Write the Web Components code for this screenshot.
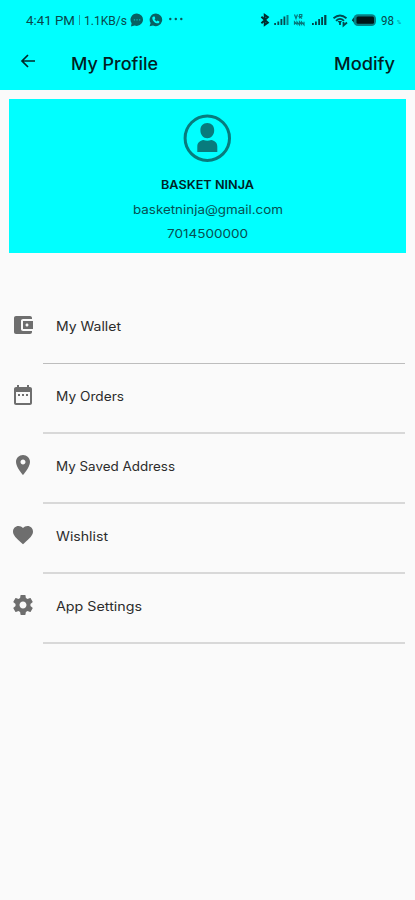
<!DOCTYPE html>
<html lang="en">
<head>
<meta charset="utf-8">
<title>My Profile</title>
<style>
html,body{margin:0;height:100%;background:#fafafa;overflow:hidden}
body{font-family:Inter,"Open Sans",sans-serif;color:#111}
</style>
</head>
<body>
<profile-screen></profile-screen>
<script>
const define = (name, html, setup) => customElements.define(name, class extends HTMLElement {
  connectedCallback() {
    if (this.shadowRoot) return;
    const t = document.createElement('template');
    t.innerHTML = typeof html === 'function' ? html(this) : html;
    this.attachShadow({mode: 'open'}).append(t.content.cloneNode(true));
    if (setup) setup(this, this.shadowRoot);
  }
});

define('wide-text', `<style>
:host{display:block;flex:none}
svg{display:block;overflow:visible}
text{fill:currentColor}
</style><svg><text lengthAdjust="spacingAndGlyphs"></text></svg>`, (el, root) => {
  const w = +el.getAttribute('w'), s = +el.getAttribute('size'), h = Math.round(s * 1.4);
  const svg = root.querySelector('svg'), t = root.querySelector('text');
  svg.setAttribute('width', w); svg.setAttribute('height', h);
  t.setAttribute('y', Math.round(s * 1.08)); t.setAttribute('textLength', w);
  t.style.fontSize = s + 'px';
  t.textContent = el.getAttribute('text');
});

define('status-bar', `<style>
:host{display:flex;align-items:center;height:40px;box-sizing:border-box;padding:0 14px 1px 26px;color:#08484b;font-family:Roboto,sans-serif}
svg{display:block;flex:none}
.left,.right{display:flex;align-items:center}
.right{margin-left:auto}
.bar{width:1px;height:10px;background:#1a9a9c;margin:0 4px}
</style>
<div class="left">
<wide-text text="4:41 PM" w="49" size="12.5"></wide-text><span class="bar"></span>
<wide-text text="1.1KB/s" w="43" size="12.5"></wide-text>
<svg width="14" height="14" viewBox="0 0 14 14" style="margin-left:3px"><path d="M7 .5a6.2 6.2 0 1 1-2.4 12L1 13.4l.6-3.1A6.3 6.3 0 0 1 7 .5z" fill="#086063"/><path d="M3.8 6.3h1.3v1.2H3.8zm2.6 0h1.3v1.2H6.4zm2.6 0h1.3v1.2H9z" fill="#08b5b7"/></svg>
<svg width="14" height="14" viewBox="0 0 14 14" style="margin-left:5px"><path d="M7 .5A6.3 6.3 0 1 1 4 12.4l-3.4.9 1-3.2A6.3 6.3 0 0 1 7 .5z" fill="#086063"/><path d="M4.6 3.5l1 .1.7 1.7-.8.9c.5 1 1.2 1.7 2.2 2.2l.9-.8 1.8.8c.1 1.2-.8 2-1.8 1.9-2.7 0-5-2.5-5.300-5.100 0-.8.5-1.500 1.300-1.700z" fill="#0ff"/></svg>
<svg width="14" height="4" viewBox="0 0 14 4" style="margin-left:6px;margin-top:-1px"><g fill="#08575a"><circle cx="1.300" cy="2" r="1.200"/><circle cx="6.800" cy="2" r="1.200"/><circle cx="12.300" cy="2" r="1.200"/></g></svg>
</div>
<div class="right">
<svg width="116" height="16" viewBox="0 0 116 16" style="overflow:visible">
<path d="M.4 4.700l6.500 6L3.700 13V2.800l3.200 2.400-6.500 6" fill="none" stroke="#012d30" stroke-width="1.900"/>
<g fill="#064c50"><path d="M13.200 11H15v2h-1.800zM16.400 9.500h1.800V13h-1.800zM19.500 7h1.800v6h-1.800zM22.500 4.500h1.800V13h-1.800z"/><path d="M25.500 3h2v10h-2z" fill="#078286"/></g>
<path d="M51 11h1.800v2H51zM54 9.500h1.800V13H54zM57.200 7H59v6h-1.800zM60.200 5H62v8h-1.800zM63.200 3H65.400V13h-2.200z" fill="#034448"/>
<path d="M33.500 2.500l1.500 4 1.500-4M38.500 6.500v-4h2.300v2h-2.300l2.500 2M33.500 12.800v-3l2.500 2.500V9.800l2.500 3v-3l2 2.500V9.800l2.500 3v-3" fill="none" stroke="#07777a" stroke-width="1.200"/>
<g fill="none" stroke="#034b4f" stroke-width="1.800"><path d="M72.500 6.300q6.500-5.600 13 0M75 8.800q4-3.800 8 0"/><path d="M79 13V9.500M82.500 10v3.500l3.500-3"/></g><path d="M76.500 9l2.500 3 2-3z" fill="#034b4f"/>
<rect x="92.500" y="2.200" width="22.500" height="11.800" rx="4.500" fill="#078084"/><rect x="95.500" y="4.500" width="17.500" height="7.200" rx="1.500" fill="#001719"/><path d="M93 5.500L91 7.500v1l2 2z" fill="#04484b"/>
</svg>
<wide-text text="98" w="13" size="12.5" style="margin-left:4px"></wide-text>
<wide-text text="%" w="4" size="6" style="margin:5px 0 0 3px;color:#07888a"></wide-text>
</div>`);

define('app-bar', `<style>
:host{display:flex;height:50px;box-sizing:border-box;padding:12px 20px 0;align-items:flex-start;color:#012022;font-weight:500}
svg{display:block;margin:0 35px 0 0}
.action{margin-left:auto}
</style>
<svg width="16" height="18" viewBox="0 0 16 18"><path d="M8 3L2 9l6 6M2.200 9H15" fill="none" stroke="#01282a" stroke-width="1.700"/></svg>
<wide-text text="My Profile" w="87" size="17"></wide-text>
<wide-text class="action" text="Modify" w="61" size="17"></wide-text>`);

define('profile-card', `<style>
:host{display:flex;flex-direction:column;align-items:center;height:154px;box-sizing:border-box;margin:9px 9px 0;padding-top:15px;background:#0ff;color:#064f52}
svg{display:block;margin-bottom:13.500px}
.name{color:#012224;font-weight:600;margin-bottom:8px}
.mail{margin-bottom:7px}
</style>
<svg width="49" height="48" viewBox="0 0 49 48"><circle cx="24.300" cy="24.200" r="22.200" fill="none" stroke="#087b7d" stroke-width="3"/><path fill="#087b7d" d="M24.300 9c4.200 0 6.900 3 6.900 7.300 0 4.700-3 8-6.900 8s-6.900-3.300-6.900-8C17.400 12 20.100 9 24.300 9zM14.300 38v-5.500c0-4 3-6 6-6.500q4 1.300 8 0c3 .5 6 2.500 6 6.500v5.500z"/></svg>
<wide-text class="name" text="BASKET NINJA" w="93" size="12"></wide-text>
<wide-text class="mail" text="basketninja@gmail.com" w="150" size="12"></wide-text>
<wide-text text="7014500000" w="81" size="12"></wide-text>`);

const icons = {
  wallet: 'M21 18v1c0 1.100-.9 2-2 2H5c-1.110 0-2-.9-2-2V5c0-1.100.89-2 2-2h14c1.100 0 2 .9 2 2v1h-9c-1.110 0-2 .9-2 2v8c0 1.100.89 2 2 2h9zm-9-2h10V8H12v8zm4-2.500c-.83 0-1.500-.67-1.500-1.500s.67-1.500 1.500-1.500 1.500.67 1.500 1.500-.67 1.500-1.500 1.500z',
  orders: 'M9 11H7v2h2v-2zm4 0h-2v2h2v-2zm4 0h-2v2h2v-2zm2-7h-1V2h-2v2H8V2H6v2H5c-1.110 0-1.990.9-1.990 2L3 20c0 1.100.89 2 2 2h14c1.100 0 2-.9 2-2V6c0-1.100-.9-2-2-2zm0 16H5V9h14v11z',
  place: 'M12 2C8.130 2 5 5.130 5 9c0 5.250 7 13 7 13s7-7.750 7-13c0-3.870-3.130-7-7-7zm0 9.500c-1.380 0-2.500-1.120-2.500-2.500s1.120-2.500 2.500-2.500 2.500 1.120 2.500 2.500-1.120 2.500-2.500 2.500z',
  heart: 'M12 21.350l-1.450-1.320C5.400 15.360 2 12.280 2 8.500 2 5.420 4.420 3 7.500 3c1.740 0 3.410.81 4.500 2.090C13.090 3.810 14.760 3 16.500 3 19.580 3 22 5.420 22 8.500c0 3.780-3.400 6.860-8.550 11.540L12 21.350z',
  gear: 'M19.430 12.980c.04-.32.07-.64.07-.98s-.03-.66-.07-.98l2.110-1.650c.19-.15.24-.42.12-.64l-2-3.460c-.12-.22-.39-.3-.61-.22l-2.490 1c-.52-.4-1.080-.73-1.690-.98l-.38-2.650C14.460 2.180 14.250 2 14 2h-4c-.25 0-.46.18-.49.42l-.38 2.650c-.61.25-1.170.59-1.690.98l-2.490-1c-.23-.09-.49 0-.61.22l-2 3.460c-.13.22-.07.49.12.64l2.110 1.650c-.04.32-.07.65-.07.98s.03.66.07.98l-2.110 1.650c-.19.15-.24.42-.12.64l2 3.460c.12.22.39.3.61.22l2.490-1c.52.4 1.080.73 1.690.98l.38 2.650c.03.24.24.42.49.42h4c.25 0 .46-.18.49-.42l.38-2.650c.61-.25 1.170-.59 1.690-.98l2.490 1c.23.09.49 0 .61-.22l2-3.460c.12-.22.07-.49-.12-.64l-2.110-1.650zM12 15.500c-1.930 0-3.500-1.570-3.500-3.500s1.570-3.500 3.500-3.500 3.500 1.570 3.500 3.500-1.570 3.500-3.500 3.500z'
};
define('menu-item', el => `<style>
:host{display:grid;grid-template:68px 2px / 45px 1fr;padding:0 10px 0 11px;color:#2c2c2c}
svg{display:block;margin-top:19px}
wide-text{margin-top:23px}
hr{grid-column:1/3;margin:0 0 0 32px;border:0;height:2px;background:#d8d8d8}
:host(:first-child) hr{height:1px;margin-top:1px;background:#bdbdbd}
</style><svg width="24" height="24" viewBox="0 0 24 24"><path fill="#6e6e6e" d="${icons[el.getAttribute('icon')]}"/></svg>
<wide-text size="12.5" text="${el.getAttribute('label')}" w="${el.getAttribute('w')}"></wide-text><hr>`);

define('profile-screen', `<style>
:host{display:block;height:900px;background:#fafafa}
header{background:#0ff}
nav{display:flex;flex-direction:column;padding-top:41px}
menu-item:not(:first-child){position:relative}
</style>
<header><status-bar></status-bar><app-bar></app-bar></header>
<profile-card></profile-card>
<nav>
<menu-item icon="wallet" label="My Wallet" w="65"></menu-item>
<menu-item icon="orders" label="My Orders" w="68"></menu-item>
<menu-item icon="place" label="My Saved Address" w="119"></menu-item>
<menu-item icon="heart" label="Wishlist" w="52"></menu-item>
<menu-item icon="gear" label="App Settings" w="86"></menu-item>
</nav>`);
</script>
</body>
</html>
